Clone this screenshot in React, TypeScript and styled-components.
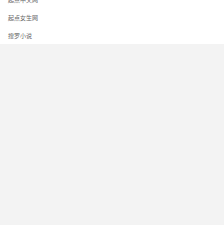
import React from 'react'
import styled, { createGlobalStyle } from 'styled-components'

const GlobalStyle = createGlobalStyle`
  html, body {
    margin: 0;
    padding: 0;
    background: #f3f3f3;
  }
  body {
    font-family: "Noto Sans CJK SC", "Liberation Sans", sans-serif;
  }
`

const Page = styled.div`
  width: 224px;
  height: 225px;
  overflow: hidden;
  background: #f3f3f3;
`

const List = styled.ul`
  list-style: none;
  margin: -10px 0 0 0;
  padding: 0;
  background: #ffffff;
`

const Item = styled.li`
  height: 18px;
  display: flex;
  align-items: center;
  padding-left: 8px;
  font-size: 6px;
  color: #666666;
`

export default function App() {
  const sites = ['起点中文网', '起点女生网', '搜罗小说']

  return (
    <Page>
      <GlobalStyle />
      <List>
        {sites.map((name) => (
          <Item key={name}>{name}</Item>
        ))}
      </List>
    </Page>
  )
}
